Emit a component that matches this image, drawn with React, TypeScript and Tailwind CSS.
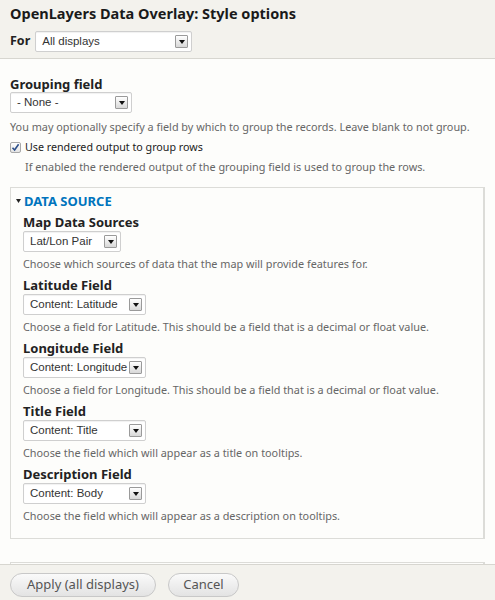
import React from "react";

const font = { fontFamily: '"Noto Sans", "DejaVu Sans", sans-serif' };

function Arrow() {
  return (
    <div className="flex h-[13px] w-[13px] shrink-0 items-center justify-center rounded-[1px] border border-[#9a9a9a] bg-gradient-to-b from-[#ffffff] to-[#d8d8d8]">
      <svg width="6" height="4" viewBox="0 0 6 4">
        <path d="M0 0 L6 0 L3 4 Z" fill="#111" />
      </svg>
    </div>
  );
}

function Select({ value, className }: { value: string; className: string }) {
  return (
    <div
      className={
        "flex h-[21px] items-center justify-between rounded-[2px] border border-[#cfcfcf] bg-white pl-[6px] pr-[3px] text-[11.5px] text-[#333] shadow-[inset_0_1px_1px_rgba(0,0,0,0.06)] " +
        className
      }
      style={{ fontFamily: '"Liberation Sans", Arial, sans-serif' }}
    >
      <span className="whitespace-nowrap">{value}</span>
      <Arrow />
    </div>
  );
}

function Field({
  label,
  value,
  desc,
  selectClass,
  first,
}: {
  label: string;
  value: string;
  desc: string;
  selectClass: string;
  first?: boolean;
}) {
  return (
    <div className={first ? "mt-[5px]" : "mt-[6px]"}>
      <div className="text-[13px] font-bold leading-[16px] text-[#222]">{label}</div>
      <div className="mt-[1px]">
        <Select value={value} className={selectClass} />
      </div>
      <div className="mt-[5px] text-[10.85px] leading-[14px] text-[#666]">{desc}</div>
    </div>
  );
}

export default function App() {
  return (
    <div className="flex h-[600px] w-[495px] flex-col overflow-hidden bg-[#fdfdfb]" style={font}>
      <div className="h-[59px] shrink-0 border-b border-[#d7d6d0] bg-[#f3f2ed] px-[10px] pt-[5px]">
        <div className="text-[14.5px] font-bold leading-[17px] text-[#1a1a1a]">
          OpenLayers Data Overlay: Style options
        </div>
        <div className="mt-[9px] flex items-center gap-[5px]">
          <span className="text-[12.5px] font-bold text-[#222]">For</span>
          <Select value="All displays" className="w-[157px]" />
        </div>
      </div>

      <div className="flex-1 overflow-hidden px-[10px] pt-[17px]">
        <div className="text-[13px] font-bold leading-[16px] text-[#222]">Grouping field</div>
        <Select value="- None -" className="w-[122px]" />
        <div className="mt-[7px] text-[10.85px] leading-[14px] text-[#666]">
          You may optionally specify a field by which to group the records. Leave blank to not group.
        </div>
        <div className="mt-[6px] flex h-[14px] items-center gap-[4px]">
          <div className="flex h-[11px] w-[11px] items-center justify-center rounded-[2px] border border-[#a8a8a8] bg-gradient-to-b from-white to-[#e4e4e4]">
            <svg width="9" height="9" viewBox="0 0 9 9">
              <path d="M1.5 4.8 L3.6 7 L7.6 1.2" stroke="#2c4f8a" strokeWidth="1.6" fill="none" />
            </svg>
          </div>
          <span className="text-[10.7px] leading-[14px] text-[#222]">Use rendered output to group rows</span>
        </div>
        <div className="mt-[6px] pl-[15px] text-[10.85px] leading-[14px] text-[#666]">
          If enabled the rendered output of the grouping field is used to group the rows.
        </div>

        <div className="mt-[13px] border border-r-2 border-[#dcdcd8] pb-[15px] pl-[12px]">
          <div className="-ml-[7px] mt-[5px] flex items-center gap-[3px] text-[13px] font-bold leading-[16px] text-[#0074bd]">
            <svg width="5" height="4" viewBox="0 0 5 4">
              <path d="M0 0 L5 0 L2.5 4 Z" fill="#222" />
            </svg>
            <span>DATA SOURCE</span>
          </div>
          <Field
            first
            label="Map Data Sources"
            value="Lat/Lon Pair"
            selectClass="w-[98px]"
            desc="Choose which sources of data that the map will provide features for."
          />
          <Field
            label="Latitude Field"
            value="Content: Latitude"
            selectClass="w-[123px]"
            desc="Choose a field for Latitude. This should be a field that is a decimal or float value."
          />
          <Field
            label="Longitude Field"
            value="Content: Longitude"
            selectClass="w-[123px]"
            desc="Choose a field for Longitude. This should be a field that is a decimal or float value."
          />
          <Field
            label="Title Field"
            value="Content: Title"
            selectClass="w-[123px]"
            desc="Choose the field which will appear as a title on tooltips."
          />
          <Field
            label="Description Field"
            value="Content: Body"
            selectClass="w-[123px]"
            desc="Choose the field which will appear as a description on tooltips."
          />
        </div>

        <div className="mt-[23px] h-[20px] border border-r-2 border-[#dcdcd8]" />
      </div>

      <div className="flex h-[36px] shrink-0 items-start gap-[12px] border-t border-[#d7d6d0] bg-[#f3f2ed] px-[10px] pt-[8px]">
        <button className="h-[24px] w-[146px] rounded-full border border-[#c8c8c8] bg-gradient-to-b from-[#fafafa] to-[#e3e3e3] text-[13px] text-[#555]">
          Apply (all displays)
        </button>
        <button className="h-[24px] w-[71px] rounded-full border border-[#c8c8c8] bg-gradient-to-b from-[#fafafa] to-[#e3e3e3] text-[13px] text-[#555]">
          Cancel
        </button>
      </div>
    </div>
  );
}
